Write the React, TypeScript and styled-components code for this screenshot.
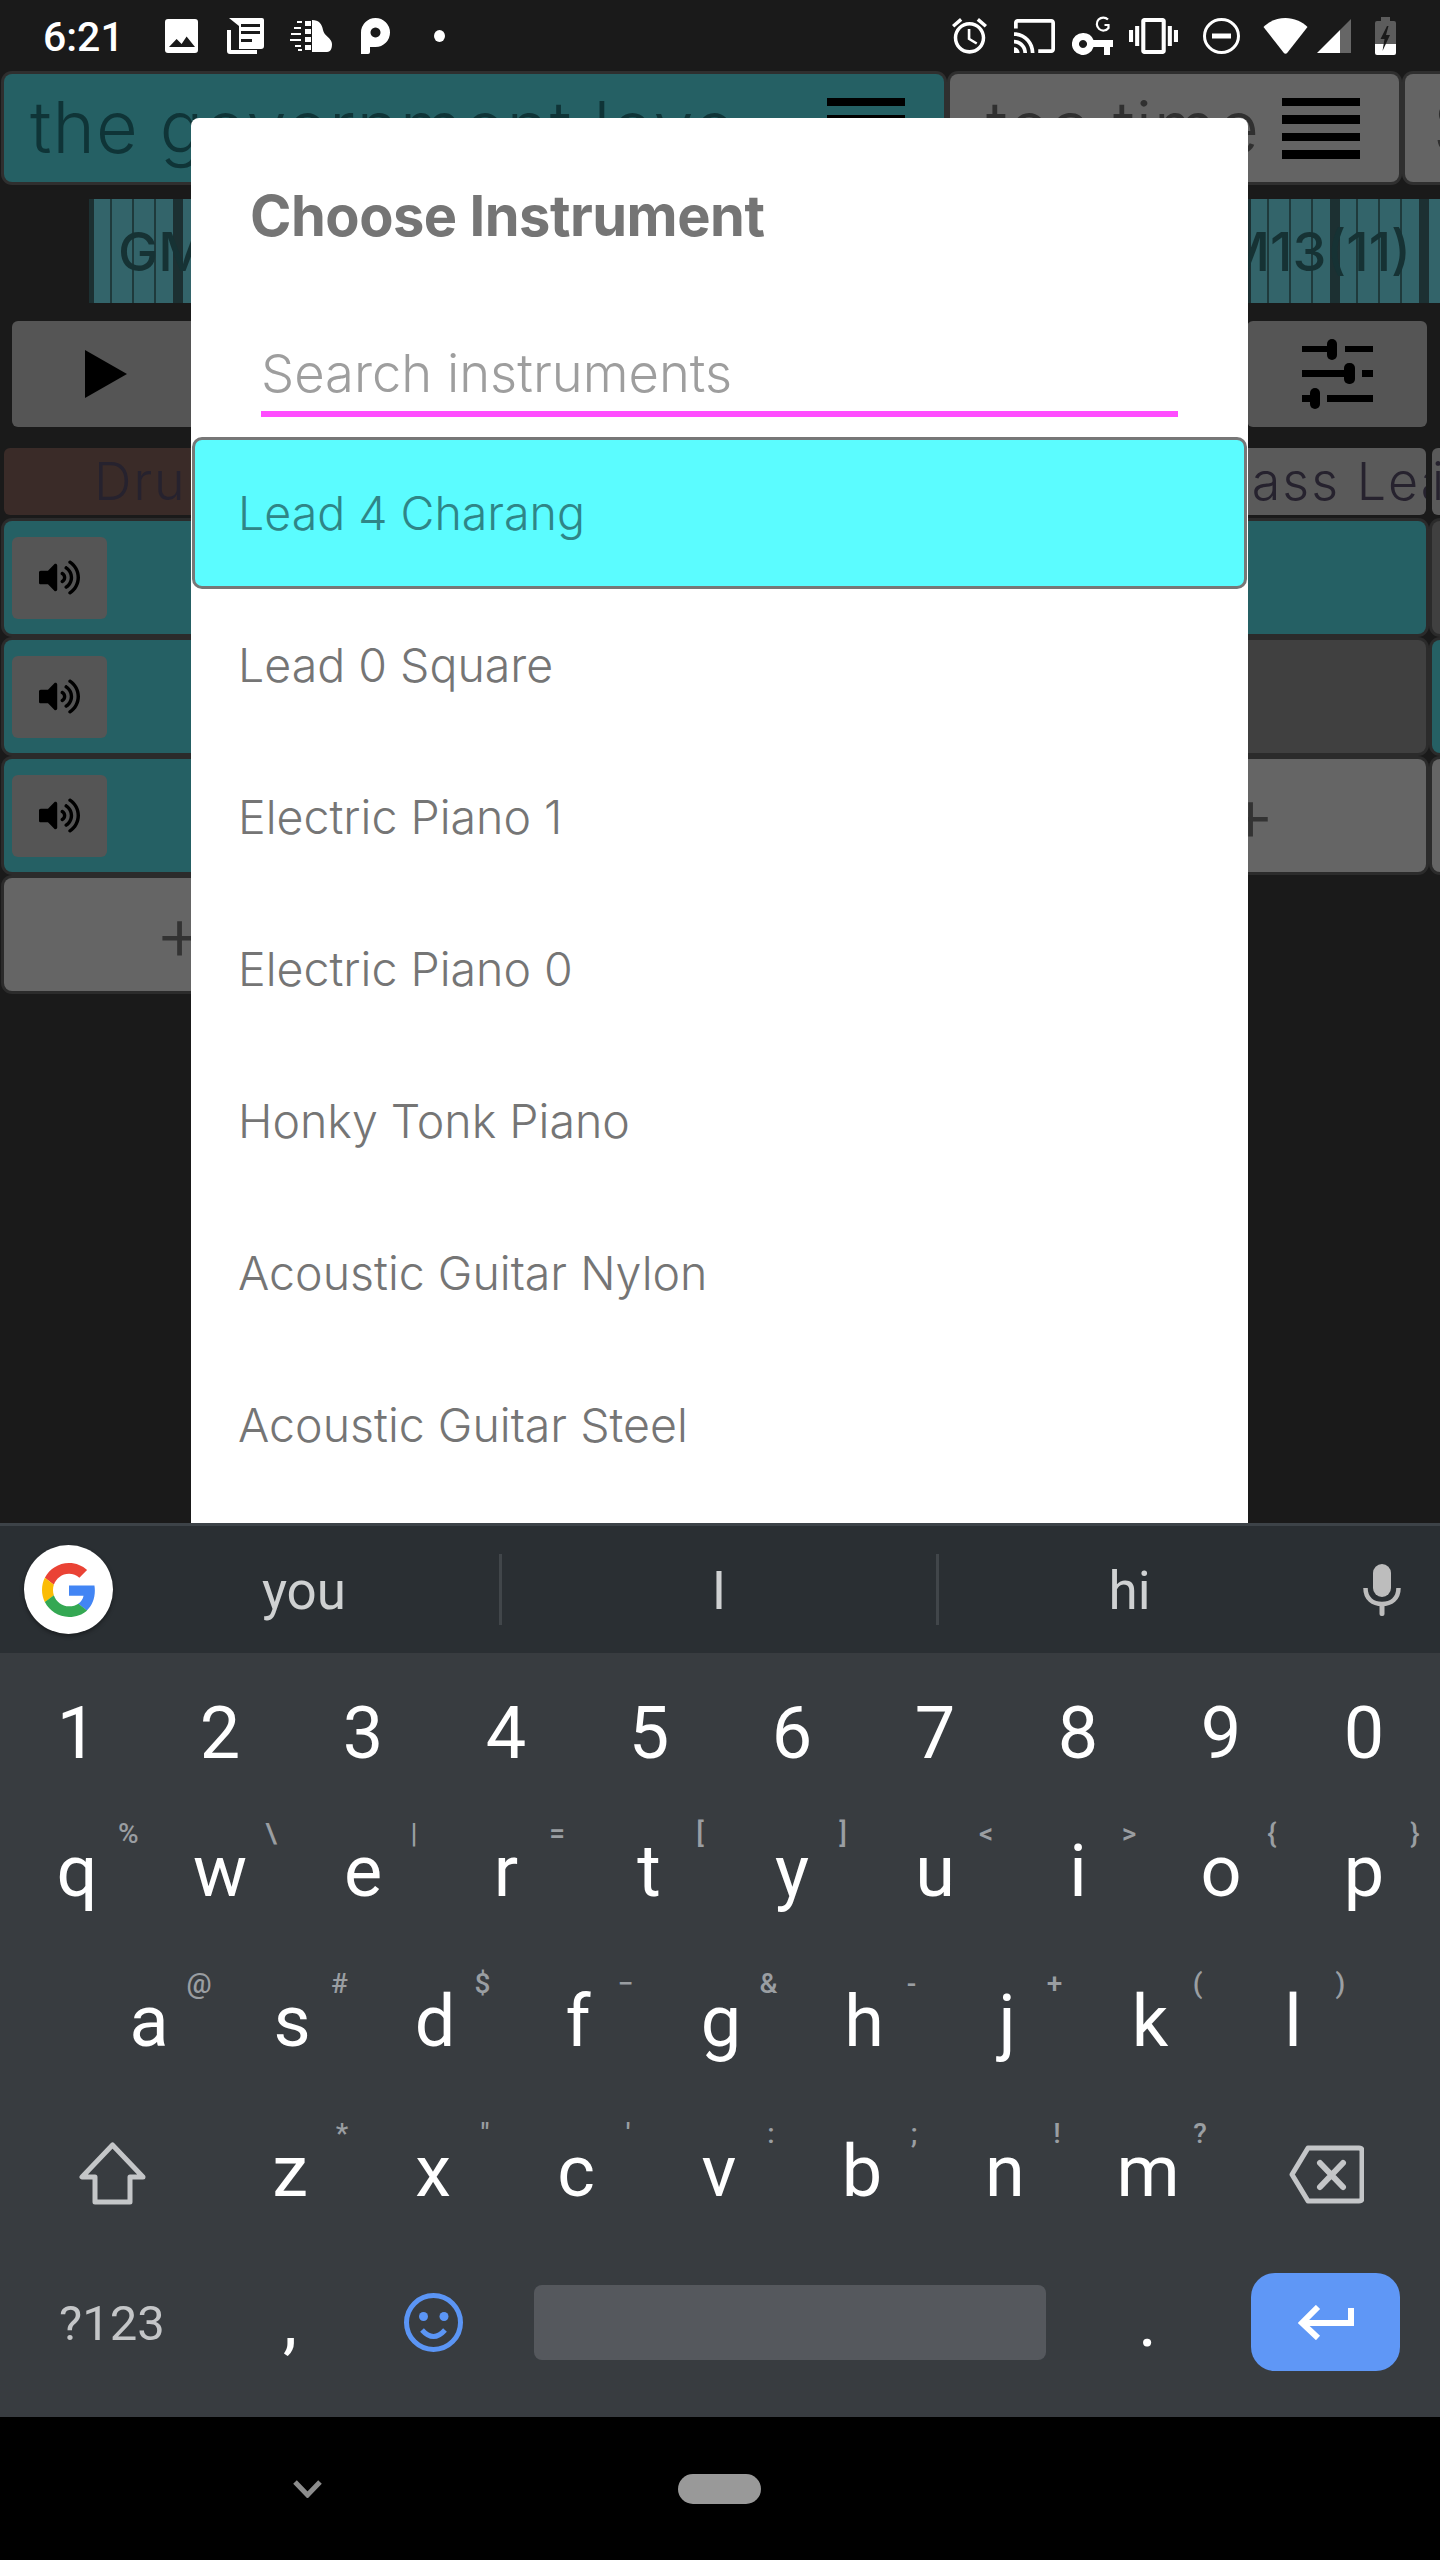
import React from 'react'
import styled, { createGlobalStyle } from 'styled-components'
import { FaVolumeUp } from 'react-icons/fa'

const GlobalStyle = createGlobalStyle`
  html, body {
    background: #000;
    margin: 0;
    padding: 0;
  }

  * {
    box-sizing: border-box;
  }
`

const Screen = styled.div`
  background: #1a1a1a;
  display: flex;
  flex-direction: column;
  font-family: Roboto, "Liberation Sans", sans-serif;
  height: 2560px;
  overflow: hidden;
  width: 1440px;
`

/* status bar */

const StatusBar = styled.div`
  align-items: center;
  color: #fff;
  display: flex;
  flex-shrink: 0;
  height: 71px;
  padding: 0 44px 0 43px;
`

const Clock = styled.span`
  font-size: 41px;
  font-weight: 500;
  line-height: 40px;
  margin-right: 41px;
  margin-top: 3px;
`

const StatusSpacer = styled.div`
  flex: 1;
`

const StatusIcon = styled.svg<{ $left?: number }>`
  display: block;
  fill: #fff;
  flex-shrink: 0;
  margin-left: ${({ $left }) => $left || 0}px;
`

/* app behind the dialog */

const Workspace = styled.div`
  flex: 1;
  min-height: 0;
  position: relative;
`

const Tabs = styled.div`
  display: flex;
  gap: 6px;
  overflow: hidden;
  padding: 3px 0 3px 4px;
`

const Tab = styled.div<{ $width: number; $inset: number; $active?: boolean }>`
  align-items: center;
  background: ${({ $active }) => $active ? '#256064' : '#646464'};
  border-radius: 8px;
  box-shadow: 0 0 0 3px #2f2f2f;
  color: ${({ $active }) => $active ? '#0f3437' : '#303030'};
  display: flex;
  flex-shrink: 0;
  font-family: Inter, sans-serif;
  font-size: 72px;
  font-weight: 300;
  height: 108px;
  padding: 0 39px 0 ${({ $inset }) => $inset}px;
  width: ${({ $width }) => $width}px;
`

const TabLabel = styled.div`
  flex: 1;
  letter-spacing: 1px;
  margin-top: -4px;
  min-width: 0;
  overflow: hidden;
  white-space: nowrap;
`

const Hamburger = styled.div`
  display: flex;
  flex-direction: column;
  flex-shrink: 0;
  gap: 9px;
  width: 78px;
`

const HamburgerBar = styled.div`
  background: #000;
  height: 8.5px;
`

const ChordRow = styled.div`
  align-items: center;
  background: repeating-linear-gradient(
    90deg,
    #1c3032 0 5px,
    #33646a 5px 21px,
    #1f3a3c 21px 23px,
    #33646a 23px 43px,
    #1f3a3c 43px 45px,
    #33646a 45px 65px,
    #1f3a3c 65px 67px,
    #33646a 67px 84.5px,
    #1c3032 84.5px 89px
  );
  color: #163234;
  display: flex;
  font-family: Inter, sans-serif;
  font-size: 54px;
  font-weight: 500;
  height: 104px;
  justify-content: space-between;
  margin: 14px 0 0 89px;
  padding: 0 29px;
`

const Transport = styled.div`
  display: flex;
  justify-content: space-between;
  margin-top: 18px;
  padding: 0 13px 0 12px;
`

const TransportButton = styled.div<{ $width: number }>`
  align-items: center;
  background: #555;
  border-radius: 6px;
  display: flex;
  height: 106px;
  justify-content: center;
  width: ${({ $width }) => $width}px;
`

const Mixer = styled.div`
  display: grid;
  gap: 6px;
  grid-template-columns: repeat(5, 351px);
  margin-top: 21px;
  padding-left: 4px;
`

const Column = styled.div`
  display: flex;
  flex-direction: column;
  gap: 6px;
`

const ColumnHead = styled.div<{ $tone: string; $inset: number }>`
  align-items: center;
  background: ${({ $tone }) => $tone};
  border-radius: 6px;
  color: #26222e;
  display: flex;
  font-family: Inter, sans-serif;
  font-size: 52px;
  font-weight: 300;
  height: 67px;
  letter-spacing: 2px;
  overflow: hidden;
  padding-left: ${({ $inset }) => $inset}px;
  white-space: nowrap;
`

const Track = styled.div<{ $on?: boolean }>`
  align-items: center;
  background: ${({ $on }) => $on ? '#256064' : '#404040'};
  border-radius: 8px;
  box-shadow: 0 0 0 3px #2b2b2b;
  display: flex;
  height: 113px;
  padding-left: 8px;
`

const MuteButton = styled.div`
  align-items: center;
  background: #555;
  border-radius: 6px;
  color: #000;
  display: flex;
  height: 82px;
  justify-content: center;
  width: 95px;
`

const AddTrack = styled.div`
  align-items: center;
  background: #656565;
  border-radius: 8px;
  box-shadow: 0 0 0 3px #2b2b2b;
  color: #333;
  display: flex;
  font-family: Inter, sans-serif;
  font-size: 76px;
  font-weight: 300;
  height: 113px;
  justify-content: center;
  line-height: 1;
  padding-bottom: 6px;
`

/* dialog */

const Dialog = styled.div`
  background: #fff;
  border-radius: 8px 8px 0 0;
  bottom: 0;
  left: 191px;
  overflow: hidden;
  padding-top: 66px;
  position: absolute;
  top: 47px;
  width: 1057px;
`

const DialogTitle = styled.div`
  color: #757575;
  font-family: Inter, sans-serif;
  font-size: 56px;
  font-weight: 700;
  letter-spacing: -.5px;
  line-height: 64px;
  padding-left: 59px;
`

const SearchInput = styled.input`
  background: none;
  border: 0;
  border-bottom: 6px solid #ff4dff;
  border-radius: 0;
  color: #555;
  display: block;
  font-family: Inter, sans-serif;
  font-size: 52.5px;
  font-weight: 300;
  height: 87px;
  margin: 82px 70px 0;
  outline: none;
  padding: 5px 0 0;
  width: 917px;

  &::placeholder {
    color: #9e9e9e;
    opacity: 1;
  }
`

const InstrumentList = styled.div`
  margin-top: 20px;
`

const Instrument = styled.div<{ $selected?: boolean }>`
  align-items: center;
  background: ${({ $selected }) => $selected ? '#5bfcff' : 'transparent'};
  border: 3px solid ${({ $selected }) => $selected ? '#777' : 'transparent'};
  border-radius: 10px;
  color: ${({ $selected }) => $selected ? '#2f8587' : '#757575'};
  display: flex;
  font-family: Inter, sans-serif;
  font-size: 46.5px;
  font-weight: 300;
  height: 152px;
  margin: 0 1px;
  padding-left: 43px;
`

/* keyboard */

const Keyboard = styled.div`
  background: #383c40;
  border-top: 3px solid #3d4348;
  flex-shrink: 0;
  height: 894px;
`

const SuggestionBar = styled.div`
  align-items: center;
  background: #2a2f33;
  display: flex;
  height: 127px;
`

const GoogleCell = styled.div`
  flex-shrink: 0;
  padding-left: 24px;
  width: 109px;
`

const GoogleBadge = styled.div`
  align-items: center;
  background: #fff;
  border-radius: 50%;
  box-shadow: 0 2px 4px rgba(0, 0, 0, .4);
  display: flex;
  height: 89px;
  justify-content: center;
  width: 89px;
`

const Suggestion = styled.div<{ $width: number }>`
  color: #cfd1d2;
  flex-shrink: 0;
  font-size: 53px;
  line-height: 60px;
  margin-top: 3px;
  text-align: center;
  width: ${({ $width }) => $width}px;
`

const SuggestionDivider = styled.div`
  background: #41464a;
  flex-shrink: 0;
  height: 71px;
  width: 3px;
`

const MicCell = styled.div`
  display: flex;
  flex: 1;
  justify-content: flex-end;
  padding-right: 39px;
`

const Keys = styled.div`
  padding: 17.5px 0 19.5px 5.5px;
`

const KeyRow = styled.div<{ $height: number; $inset?: number }>`
  display: flex;
  height: ${({ $height }) => $height}px;
  padding-left: ${({ $inset }) => $inset || 0}px;
`

const Key = styled.div<{ $width?: number }>`
  align-items: center;
  color: #fff;
  display: flex;
  flex-shrink: 0;
  font-size: 72px;
  justify-content: center;
  line-height: 72px;
  position: relative;
  width: ${({ $width }) => $width || 143}px;
`

const KeyHint = styled.span<{ $left: number }>`
  color: #9a9ea2;
  font-size: 28px;
  font-weight: 500;
  left: ${({ $left }) => $left}px;
  line-height: 28px;
  position: absolute;
  text-align: center;
  top: 23px;
  width: 20px;
`

const SymbolsLabel = styled.span`
  color: #c4c6c8;
  font-size: 49px;
  line-height: 48px;
  margin-top: 3px;
`

const ActionIcon = styled.div<{ $drop: number }>`
  margin-top: ${({ $drop }) => $drop}px;
`

const SpaceBar = styled.div`
  align-self: center;
  background: #55585d;
  border-radius: 8px;
  flex-shrink: 0;
  height: 75px;
  margin: 0 30px 0 29.5px;
  width: 512px;
`

const EnterButton = styled.div`
  align-items: center;
  background: #5f97f6;
  border-radius: 24px;
  display: flex;
  height: 98px;
  justify-content: center;
  width: 149px;
`

/* navigation */

const NavBar = styled.div`
  align-items: center;
  background: #000;
  display: flex;
  flex-shrink: 0;
  height: 143px;
  padding-left: 293px;
`

const NavPill = styled.div`
  background: #999;
  border-radius: 15px;
  height: 30px;
  margin-left: 356px;
  width: 83px;
`

const GlyphSvg = styled.svg`
  display: block;
  flex-shrink: 0;
`

const ImageIcon = () => (
  <StatusIcon width="33" height="34" viewBox="0 0 33 34">
    <path fillRule="evenodd" d="M3 0h27a3 3 0 0 1 3 3v28a3 3 0 0 1-3 3H3a3 3 0 0 1-3-3V3a3 3 0 0 1 3-3zM4 28h26l-8.400-10.400-5 7.400-5-5z" />
  </StatusIcon>
)

const NewsIcon = () => (
  <StatusIcon $left={29} width="37" height="36" viewBox="0 0 37 36">
    <path fillRule="evenodd" d="M2 0h33a2 2 0 0 1 2 2v26a3 3 0 0 1-3 3H12V8zM14 6v3h19V6zM14 13v3h19v-3zM14 21v3h11v-3z" />
    <path d="M0 12h4v20h26v4H3a3 3 0 0 1-3-3z" />
  </StatusIcon>
)

const PianoIcon = () => (
  <StatusIcon $left={25} width="43" height="32" viewBox="0 0 43 32">
    <path d="M23 0c7 0 10 4 11 10 1 6 9 8 9 14 0 4-1 8-5 8H23z" />
    {[1, 9, 17, 25].map((y) => <rect key={y} x="16" y={y} width="6" height="5" />)}
    {[[8, 1, 5], [5, 7, 7], [2, 13, 10], [1, 19, 11], [6, 25, 6], [9, 29, 4]].map(([x, y, w]) => (
      <rect key={y} x={x} y={y} width={w} height="2" />
    ))}
  </StatusIcon>
)

const ParkingIcon = () => (
  <StatusIcon $left={29} width="29" height="36" viewBox="0 0 29 36">
    <path fillRule="evenodd" d="M0 14.500a14.500 14.500 0 1 1 14.500 14.500H9v5q0 2-2 2H0zM14.500 9.500a5 5 0 1 0 .01 0z" />
  </StatusIcon>
)

const DotIcon = () => (
  <StatusIcon $left={44} width="11" height="12" viewBox="0 0 11 12">
    <ellipse cx="5.500" cy="6" rx="5.500" ry="6" />
  </StatusIcon>
)

const AlarmIcon = () => (
  <StatusIcon width="35" height="36" viewBox="2 1.800 20 20.400" preserveAspectRatio="none">
    <path d="M22 5.720l-4.600-3.860-1.290 1.530 4.600 3.860L22 5.720zM7.880 3.390L6.600 1.860 2 5.710l1.290 1.530 4.590-3.850zM12.500 8H11v6l4.750 2.850.75-1.230-4-2.370V8zM12 4c-4.970 0-9 4.030-9 9s4.030 9 9 9 9-4.030 9-9-4.030-9-9-9zm0 16c-3.870 0-7-3.130-7-7s3.130-7 7-7 7 3.130 7 7-3.130 7-7 7z" />
  </StatusIcon>
)

const CastIcon = () => (
  <StatusIcon $left={27} width="41" height="34" viewBox="1 3 22 18" preserveAspectRatio="none">
    <path d="M21 3H3c-1.100 0-2 .9-2 2v3h2V5h18v14h-7v2h7c1.100 0 2-.9 2-2V5c0-1.100-.9-2-2-2zM1 18v3h3c0-1.660-1.340-3-3-3zm0-4v2c2.760 0 5 2.240 5 5h2c0-3.870-3.130-7-7-7zm0-4v2c4.970 0 9 4.030 9 9h2c0-6.080-4.930-11-11-11z" />
  </StatusIcon>
)

const VpnKeyIcon = () => (
  <StatusIcon $left={17} width="41" height="39" viewBox="0 0 41 39">
    <path fillRule="evenodd" d="M11 17a11 11 0 0 1 10.500 7H41v7h-3v8h-6v-8h-10.500A11 11 0 1 1 11 17zM11 24a4 4 0 1 0 .01 0z" />
    <path d="M36 3.500A6.500 6.500 0 1 0 36.500 12V9h-4" fill="none" stroke="#fff" strokeWidth="2.200" />
  </StatusIcon>
)

const VibrateIcon = () => (
  <StatusIcon $left={16} width="49" height="36" viewBox="0 3 24 18" preserveAspectRatio="none">
    <path d="M0 15h2V9H0v6zm3 2h2V7H3v10zm19-8v6h2V9h-2zm-3 8h2V7h-2v10zM16.500 3h-9C6.670 3 6 3.670 6 4.500v15c0 .83.67 1.500 1.500 1.500h9c.83 0 1.500-.67 1.500-1.500v-15c0-.83-.67-1.500-1.500-1.500zM16 19H8V5h8v14z" />
  </StatusIcon>
)

const DndIcon = () => (
  <StatusIcon $left={25} width="37" height="36" viewBox="0 0 37 36">
    <ellipse cx="18.500" cy="18" rx="17" ry="16.500" fill="none" stroke="#fff" strokeWidth="3" />
    <rect x="9" y="15.500" width="19" height="5" />
  </StatusIcon>
)

const WifiIcon = () => (
  <StatusIcon $left={23} width="45" height="36" viewBox="0 0 45 36">
    <path d="M20.500 34.500L.5 9C6 3.500 14 0 22.500 0S39 3.500 44.500 9l-20 25.500q-2 2.500-4 0z" />
  </StatusIcon>
)

const SignalIcon = () => (
  <StatusIcon $left={9} width="34" height="34" viewBox="0 0 34 34">
    <path d="M23 11L34 0v34H23z" fill="#666" />
    <path d="M0 34l23-23v23z" />
  </StatusIcon>
)

const BatteryIcon = () => (
  <StatusIcon $left={24} width="21" height="38" viewBox="0 0 21 38">
    <path d="M6 0h9v4h4a2 2 0 0 1 2 2v25H0V6a2 2 0 0 1 2-2h4z" fill="#5c5c5c" />
    <path d="M0 27h21v9a2 2 0 0 1-2 2H2a2 2 0 0 1-2-2z" />
    <path d="M12 9L5.500 22h4L7.500 34 15 18h-4l2.500-9z" fill="#1a1a1a" />
  </StatusIcon>
)

const PlayIcon = () => (
  <GlyphSvg width="42" height="48" viewBox="0 0 42 48">
    <path d="M0 0l42 24L0 48z" />
  </GlyphSvg>
)

const SlidersIcon = () => (
  <GlyphSvg width="71" height="70" viewBox="0 0 71 70">
    <rect x="0" y="7" width="25" height="6" />
    <rect x="25" y="0" width="10" height="21" rx="5" />
    <rect x="43" y="7" width="28" height="6" />
    <rect x="0" y="31" width="42" height="7" />
    <rect x="42" y="24" width="11" height="21" rx="5" />
    <rect x="60" y="31" width="11" height="7" />
    <rect x="0" y="56" width="8" height="7" />
    <rect x="8" y="49" width="10" height="21" rx="5" />
    <rect x="25" y="56" width="46" height="7" />
  </GlyphSvg>
)

const GoogleIcon = () => (
  <GlyphSvg width="54" height="54" viewBox="0 0 48 48">
    <path fill="#EA4335" d="M24 9.500c3.540 0 6.710 1.220 9.210 3.600l6.850-6.850C35.900 2.380 30.470 0 24 0 14.620 0 6.510 5.380 2.560 13.220l7.980 6.190C12.430 13.720 17.740 9.500 24 9.500z" />
    <path fill="#4285F4" d="M46.980 24.550c0-1.570-.15-3.090-.38-4.550H24v9.020h12.940c-.58 2.960-2.260 5.480-4.780 7.180l7.730 6c4.510-4.180 7.090-10.360 7.090-17.650z" />
    <path fill="#FBBC05" d="M10.530 28.590c-.48-1.450-.76-2.990-.76-4.590s.27-3.140.76-4.590l-7.980-6.190C.92 16.460 0 20.120 0 24c0 3.880.92 7.540 2.560 10.780l7.970-6.190z" />
    <path fill="#34A853" d="M24 48c6.480 0 11.930-2.130 16.080-5.810l-7.730-6c-2.150 1.450-4.920 2.300-8.350 2.300-6.260 0-11.570-4.220-13.470-9.910l-7.980 6.190C6.510 42.620 14.620 48 24 48z" />
  </GlyphSvg>
)

const MicIcon = () => (
  <GlyphSvg width="38" height="52" viewBox="0 0 38 52" fill="#bdbdbd">
    <rect x="10" y="0" width="18" height="33" rx="9" />
    <path d="M2.500 24C2.500 35 10 40 19 40s16.500-5 16.500-16" fill="none" stroke="#bdbdbd" strokeWidth="4.500" />
    <rect x="16.500" y="39" width="5" height="13" rx="2" />
  </GlyphSvg>
)

const ShiftIcon = () => (
  <GlyphSvg width="67" height="63" viewBox="0 0 67 63">
    <path d="M33.500 3L3 35h13v25h35V35h13z" fill="none" stroke="#c4c6c8" strokeWidth="5" strokeLinejoin="round" />
  </GlyphSvg>
)

const BackspaceIcon = () => (
  <GlyphSvg width="75" height="59" viewBox="0 0 75 59">
    <path d="M19 3h51q3 0 3 3v47q0 3-3 3H19L3 29.500z" fill="none" stroke="#c4c6c8" strokeWidth="5" strokeLinejoin="round" />
    <path d="M31 18l23 24M54 18L31 42" fill="none" stroke="#c4c6c8" strokeWidth="6" strokeLinecap="round" />
  </GlyphSvg>
)

const EmojiIcon = () => (
  <GlyphSvg width="59" height="59" viewBox="0 0 59 59">
    <circle cx="29.500" cy="29.500" r="27" fill="none" stroke="#5b95f5" strokeWidth="5" />
    <circle cx="19.500" cy="23.500" r="4.500" fill="#5b95f5" />
    <circle cx="40" cy="23.500" r="4.500" fill="#5b95f5" />
    <path d="M18 37q11.500 13 23 0" fill="none" stroke="#5b95f5" strokeWidth="5" />
  </GlyphSvg>
)

const EnterIcon = () => (
  <GlyphSvg width="56" height="35" viewBox="0 0 56 35">
    <path d="M53 3v15H5" fill="none" stroke="#fff" strokeWidth="6" />
    <path d="M20 2L4 18l16 15" fill="none" stroke="#fff" strokeWidth="6" />
  </GlyphSvg>
)

const ChevronIcon = () => (
  <GlyphSvg width="29" height="18" viewBox="0 0 29 18">
    <path d="M2 2l12.500 13L27 2" fill="none" stroke="#8c8c8c" strokeWidth="5" />
  </GlyphSvg>
)

const instruments = [
  'Lead 4 Charang',
  'Lead 0 Square',
  'Electric Piano 1',
  'Electric Piano 0',
  'Honky Tonk Piano',
  'Acoustic Guitar Nylon',
  'Acoustic Guitar Steel',
]

const mixerColumns = [
  { name: 'Drums', tone: '#3a2b28', inset: 90, tracks: [true, true, true] },
  { name: '', tone: '#5a5a5a', inset: 0, tracks: [true, false] },
  { name: '', tone: '#5a5a5a', inset: 0, tracks: [false, true] },
  { name: 'Bass Lead', tone: '#5a5a5a', inset: 141, tracks: [true, false] },
  { name: 'i', tone: '#5a5a5a', inset: 0, tracks: [false, true] },
]

const digitKeys = ['1', '2', '3', '4', '5', '6', '7', '8', '9', '0']

const topKeys = [
  ['q', '%'], ['w', '\\'], ['e', '|'], ['r', '='], ['t', '['],
  ['y', ']'], ['u', '<'], ['i', '>'], ['o', '{'], ['p', '}'],
]

const homeKeys = [
  ['a', '@'], ['s', '#'], ['d', '$'], ['f', '−'], ['g', '&'],
  ['h', '-'], ['j', '+'], ['k', '('], ['l', ')'],
]

const bottomKeys = [
  ['z', '*'], ['x', '"'], ['c', "'"], ['v', ':'], ['b', ';'], ['n', '!'], ['m', '?'],
]

const renderKeys = (keys: string[][], hintLeft: number) => keys.map(([letter, hint]) => (
  <Key key={letter}>
    {letter}
    <KeyHint $left={hintLeft}>{hint}</KeyHint>
  </Key>
))

const App = () => (
  <Screen>
    <GlobalStyle />

    <StatusBar>
      <Clock>6:21</Clock>
      <ImageIcon />
      <NewsIcon />
      <PianoIcon />
      <ParkingIcon />
      <DotIcon />
      <StatusSpacer />
      <AlarmIcon />
      <CastIcon />
      <VpnKeyIcon />
      <VibrateIcon />
      <DndIcon />
      <WifiIcon />
      <SignalIcon />
      <BatteryIcon />
    </StatusBar>

    <Workspace>
      <Tabs>
        <Tab $width={940} $inset={26} $active>
          <TabLabel>the government love</TabLabel>
          <Hamburger>
            {[0, 1, 2, 3].map((bar) => <HamburgerBar key={bar} />)}
          </Hamburger>
        </Tab>
        <Tab $width={449} $inset={36}>
          <TabLabel>tea time</TabLabel>
          <Hamburger>
            {[0, 1, 2, 3].map((bar) => <HamburgerBar key={bar} />)}
          </Hamburger>
        </Tab>
        <Tab $width={300} $inset={28}>
          <TabLabel>S</TabLabel>
        </Tab>
      </Tabs>

      <ChordRow>
        <span>GM</span>
        <span>GM13(11)</span>
      </ChordRow>

      <Transport>
        <TransportButton $width={188}><PlayIcon /></TransportButton>
        <TransportButton $width={180}><SlidersIcon /></TransportButton>
      </Transport>

      <Mixer>
        {mixerColumns.map(({ name, tone, inset, tracks }, column) => (
          <Column key={column}>
            <ColumnHead $tone={tone} $inset={inset}>{name}</ColumnHead>
            {tracks.map((on, row) => (
              <Track key={row} $on={on}>
                {column === 0 && (
                  <MuteButton><FaVolumeUp size={41} /></MuteButton>
                )}
              </Track>
            ))}
            <AddTrack>+</AddTrack>
          </Column>
        ))}
      </Mixer>

      <Dialog>
        <DialogTitle>Choose Instrument</DialogTitle>
        <SearchInput placeholder="Search instruments" readOnly />
        <InstrumentList>
          {instruments.map((name, index) => (
            <Instrument key={name} $selected={index === 0}>{name}</Instrument>
          ))}
        </InstrumentList>
      </Dialog>
    </Workspace>

    <Keyboard>
      <SuggestionBar>
        <GoogleCell>
          <GoogleBadge><GoogleIcon /></GoogleBadge>
        </GoogleCell>
        <Suggestion $width={390}>you</Suggestion>
        <SuggestionDivider />
        <Suggestion $width={434}>I</Suggestion>
        <SuggestionDivider />
        <Suggestion $width={381}>hi</Suggestion>
        <MicCell><MicIcon /></MicCell>
      </SuggestionBar>

      <Keys>
        <KeyRow $height={126}>
          {digitKeys.map((digit) => <Key key={digit}>{digit}</Key>)}
        </KeyRow>
        <KeyRow $height={150}>{renderKeys(topKeys, 112.5)}</KeyRow>
        <KeyRow $height={150} $inset={72}>{renderKeys(homeKeys, 109)}</KeyRow>
        <KeyRow $height={150}>
          <Key $width={213}><ActionIcon $drop={3}><ShiftIcon /></ActionIcon></Key>
          {renderKeys(bottomKeys, 113.5)}
          <Key $width={213}><ActionIcon $drop={6}><BackspaceIcon /></ActionIcon></Key>
        </KeyRow>
        <KeyRow $height={151}>
          <Key $width={213}><SymbolsLabel>?123</SymbolsLabel></Key>
          <Key>,</Key>
          <Key><EmojiIcon /></Key>
          <SpaceBar />
          <Key>.</Key>
          <Key $width={213}><EnterButton><EnterIcon /></EnterButton></Key>
        </KeyRow>
      </Keys>
    </Keyboard>

    <NavBar>
      <ChevronIcon />
      <NavPill />
    </NavBar>
  </Screen>
)

export default App
